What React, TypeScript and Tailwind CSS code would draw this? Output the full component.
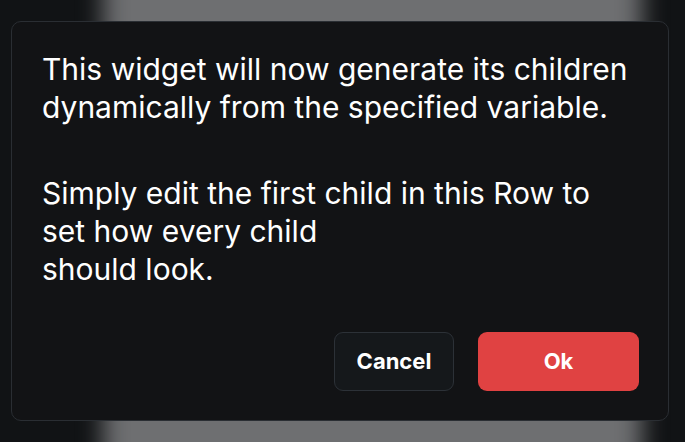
export default function App() {
  return (
    <div className="relative w-[685px] h-[442px] overflow-hidden bg-[#111315] font-['Inter',sans-serif]">
      <div className="absolute left-[103px] right-[43px] top-[-60px] bottom-[-60px] bg-[#6e6f71] blur-[12px]" />
      <div className="relative flex h-full w-full items-start justify-start pl-[11px] pt-[21px]">
        <div className="flex h-[400px] w-[658px] flex-col justify-between rounded-[10px] border border-[#2a2e33] bg-[#121315] pl-[30px] pr-[20px] pt-[28px] pb-[29px]">
          <div className="text-[30px] leading-[38px] text-white tracking-[0px] whitespace-nowrap">
            <p>
              This widget will now generate its children
              <br />
              dynamically from the specified variable.
            </p>
            <p className="mt-[48px]">
              Simply edit the first child in this Row to
              <br />
              set how every child
              <br />
              should look.
            </p>
          </div>
          <div className="flex justify-end gap-[24px] pr-[9px]">
            <button className="h-[59px] w-[120px] rounded-[9px] border border-[#2c3137] bg-[#15181b] text-[22px] font-bold text-white">
              Cancel
            </button>
            <button className="h-[59px] w-[161px] rounded-[9px] bg-[#e04242] text-[22px] font-bold text-white">
              Ok
            </button>
          </div>
        </div>
      </div>
    </div>
  );
}
